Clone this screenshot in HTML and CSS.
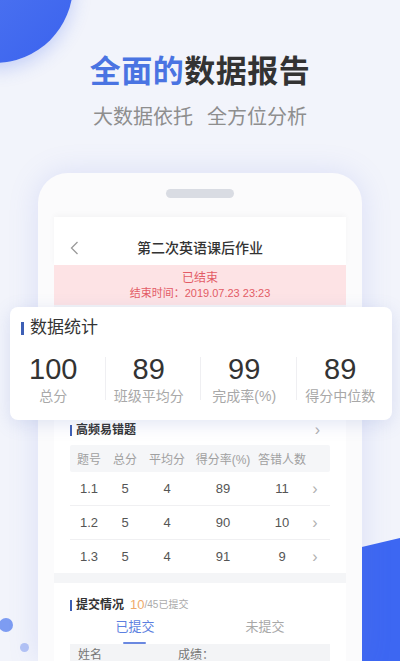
FILE: index.html
```html
<!DOCTYPE html>
<html lang="zh-CN">
<head>
    <meta charset="UTF-8">
    <meta name="viewport" content="width=device-width, initial-scale=1.0">
    <title>全面的数据报告</title>
    <link rel="stylesheet" href="styles.css">
</head>
<body>
    <div class="blob-top"></div>
    <div class="blob-right"></div>
    <div class="dot dot-big"></div>
    <div class="dot dot-small"></div>

    <header class="hero">
        <h1 class="hero-title"><span class="accent">全面的</span>数据报告</h1>
        <p class="hero-sub"><span>大数据依托</span><span>全方位分析</span></p>
    </header>

    <div class="phone">
        <div class="notch"></div>
        <div class="screen">
            <div class="nav">
                <svg class="back" width="9" height="14" viewBox="0 0 9 14">
                    <path d="M7.5 1 L1.5 7 L7.5 13" fill="none" stroke="#9a9a9a" stroke-width="1.3"/>
                </svg>
                <div class="nav-title">第二次英语课后作业</div>
                <span></span>
            </div>

            <div class="banner">
                <div class="banner-state">已结束</div>
                <div class="banner-time">结束时间：2019.07.23 23:23</div>
            </div>

            <div class="stats-card">
                <div class="card-title"><i class="bar"></i>数据统计</div>
                <div class="stats">
                    <div class="stat"><div class="stat-num">100</div><div class="stat-label">总分</div></div>
                    <div class="stat"><div class="stat-num">89</div><div class="stat-label">班级平均分</div></div>
                    <div class="stat"><div class="stat-num">99</div><div class="stat-label">完成率(%)</div></div>
                    <div class="stat"><div class="stat-num">89</div><div class="stat-label">得分中位数</div></div>
                </div>
            </div>

            <section class="panel panel-wrong">
                <div class="panel-head">
                    <div class="panel-title"><i class="bar small"></i>高频易错题</div>
                    <span class="chev">&#8250;</span>
                </div>
                <div class="table">
                    <div class="row head">
                        <span>题号</span><span>总分</span><span>平均分</span><span>得分率(%)</span><span>答错人数</span><span></span>
                    </div>
                    <div class="row">
                        <span>1.1</span><span>5</span><span>4</span><span>89</span><span>11</span><span class="chev">&#8250;</span>
                    </div>
                    <div class="row">
                        <span>1.2</span><span>5</span><span>4</span><span>90</span><span>10</span><span class="chev">&#8250;</span>
                    </div>
                    <div class="row last">
                        <span>1.3</span><span>5</span><span>4</span><span>91</span><span>9</span><span class="chev">&#8250;</span>
                    </div>
                </div>
            </section>

            <section class="panel panel-submit">
                <div class="panel-title"><i class="bar small"></i>提交情况 <b class="count">10</b><small>/45已提交</small></div>
                <div class="tabs">
                    <div class="tab active">已提交</div>
                    <div class="tab">未提交</div>
                </div>
                <div class="list-head">
                    <span>姓名</span><span>成绩：</span>
                </div>
            </section>
        </div>
    </div>
</body>
</html>
```

FILE: styles.css
```css
* {
    margin: 0;
    padding: 0;
    box-sizing: border-box;
}

html, body {
    width: 100%;
    height: 100%;
    overflow: hidden;
}

body {
    position: relative;
    background: #f2f4fb;
    font-family: "Liberation Sans", "Noto Sans CJK SC", sans-serif;
    color: #333;
}

/* decorations */
.blob-top {
    position: absolute;
    left: -83px;
    top: -93px;
    width: 156px;
    height: 156px;
    border-radius: 50%;
    background: linear-gradient(135deg, #5a80f2, #3a62ee);
    box-shadow: 0 6px 18px rgba(60, 98, 238, 0.25);
}

.blob-right {
    position: absolute;
    right: 0;
    top: 520px;
    width: 140px;
    height: 160px;
    background: #3d67f2;
    clip-path: polygon(0 51px, 100% 18px, 100% 100%, 0 100%);
}

.dot {
    position: absolute;
    border-radius: 50%;
}

.dot-big {
    left: -1px;
    top: 618px;
    width: 14px;
    height: 14px;
    background: #7d9cf2;
}

.dot-small {
    left: 20px;
    top: 643px;
    width: 9px;
    height: 9px;
    background: #b3c3f5;
}

/* hero */
.hero {
    position: relative;
    padding-top: 53px;
    text-align: center;
}

.hero-title {
    font-size: 31px;
    line-height: 38px;
    font-weight: bold;
    color: #333;
    letter-spacing: 0.5px;
}

.hero-title .accent {
    color: #4a74e2;
}

.hero-sub {
    margin-top: 14px;
    font-size: 20px;
    line-height: 24px;
    color: #8e8e8e;
    display: flex;
    justify-content: center;
    gap: 14px;
}

/* phone */
.phone {
    position: relative;
    width: 324px;
    margin: 44px 0 0 38px;
    height: 488px;
    padding: 16px 16px 0;
    background: #fbfbfc;
    border-radius: 30px 30px 0 0;
    box-shadow: 0 0 30px rgba(110, 130, 230, 0.18);
    overflow: visible;
}

.notch {
    width: 68px;
    height: 9px;
    margin: 0 auto 19px;
    border-radius: 5px;
    background: #d9dce3;
}

.screen {
    background: #f4f5f7;
    height: 444px;
    overflow: visible;
}

.nav {
    height: 48px;
    background: #fff;
    display: grid;
    grid-template-columns: 40px 1fr 40px;
    align-items: end;
    padding-bottom: 7px;
    box-shadow: 0 -2px 6px rgba(0, 0, 0, 0.03);
}

.back {
    margin-left: 16px;
    margin-bottom: 3px;
}

.nav-title {
    text-align: center;
    font-size: 14px;
    line-height: 20px;
    font-weight: 500;
    color: #333;
}

.banner {
    height: 40px;
    background: #fde3e5;
    text-align: center;
    color: #e35c66;
    padding-top: 5px;
}

.banner-state {
    font-size: 12px;
    line-height: 16px;
}

.banner-time {
    font-size: 11px;
    line-height: 15px;
}

/* stats card */
.stats-card {
    position: relative;
    z-index: 2;
    margin: 2px -46px 0 -44px;
    height: 113px;
    padding-top: 9px;
    background: #fff;
    border-radius: 8px;
    box-shadow: 0 4px 18px rgba(100, 120, 200, 0.18);
}

.card-title {
    display: flex;
    align-items: center;
    gap: 6px;
    padding-left: 11px;
    font-size: 17px;
    line-height: 24px;
    color: #333;
}

.bar {
    display: inline-block;
    width: 3px;
    height: 13px;
    background: #3d5fb5;
}

.bar.small {
    width: 2px;
    height: 11px;
}

.stats {
    display: grid;
    grid-template-columns: repeat(4, 1fr);
    margin-top: 17px;
}

.stat {
    text-align: center;
    padding-right: 8px;
    border-right: 1px solid #efeff2;
    height: 43px;
    display: flex;
    flex-direction: column;
    justify-content: flex-end;
    position: relative;
}

.stat:last-child {
    border-right: none;
}

.stat-num {
    position: absolute;
    left: 0;
    right: 8px;
    top: -5px;
    font-size: 29px;
    line-height: 34px;
    color: #333;
}

.stat-label {
    font-size: 14px;
    line-height: 18px;
    color: #a8a8a8;
    margin-bottom: -5px;
}

/* panels */
.panel {
    background: #fff;
    padding: 0 16px;
}

.panel-wrong {
    padding-top: 1px;
    height: 153px;
}

.panel-head {
    display: flex;
    justify-content: space-between;
    align-items: center;
    padding-right: 10px;
}

.panel-title {
    display: flex;
    align-items: center;
    gap: 4px;
    font-size: 12px;
    line-height: 18px;
    font-weight: bold;
    color: #333;
}

.chev {
    color: #b0b0b0;
    font-size: 16px;
    line-height: 18px;
}

.table {
    margin-top: 6px;
}

.row {
    display: grid;
    grid-template-columns: 38px 34px 50px 62px 56px 10px;
    align-items: center;
    height: 34px;
    font-size: 13px;
    color: #555;
    text-align: center;
    border-bottom: 1px solid #f0f0f2;
}

.row.head {
    height: 27px;
    background: #f5f6f8;
    border-bottom: none;
    font-size: 12px;
    color: #a0a0a0;
    border-radius: 2px;
}

.row.last {
    height: 33px;
    border-bottom: none;
}

.panel-submit {
    margin-top: 10px;
    padding-top: 13px;
    height: 78px;
    overflow: hidden;
}

.count {
    font-size: 13px;
    font-weight: normal;
    color: #eeaa6a;
    margin-left: 2px;
}

.panel-submit small {
    font-size: 10px;
    font-weight: normal;
    color: #aaa;
    margin-left: -4px;
}

.tabs {
    display: grid;
    grid-template-columns: 1fr 1fr;
    height: 30px;
}

.tab {
    text-align: center;
    font-size: 13px;
    line-height: 18px;
    padding-top: 4px;
    color: #a8a8a8;
    position: relative;
}

.tab.active {
    color: #5c7fe0;
}

.tab.active::after {
    content: '';
    position: absolute;
    left: 50%;
    bottom: 0;
    width: 23px;
    height: 2px;
    margin-left: -12px;
    background: #6a88e0;
    border-radius: 1px;
}

.list-head {
    display: flex;
    gap: 76px;
    height: 30px;
    padding: 2px 8px 0;
    background: #f3f4f6;
    font-size: 12px;
    line-height: 18px;
    color: #777;
}
```
